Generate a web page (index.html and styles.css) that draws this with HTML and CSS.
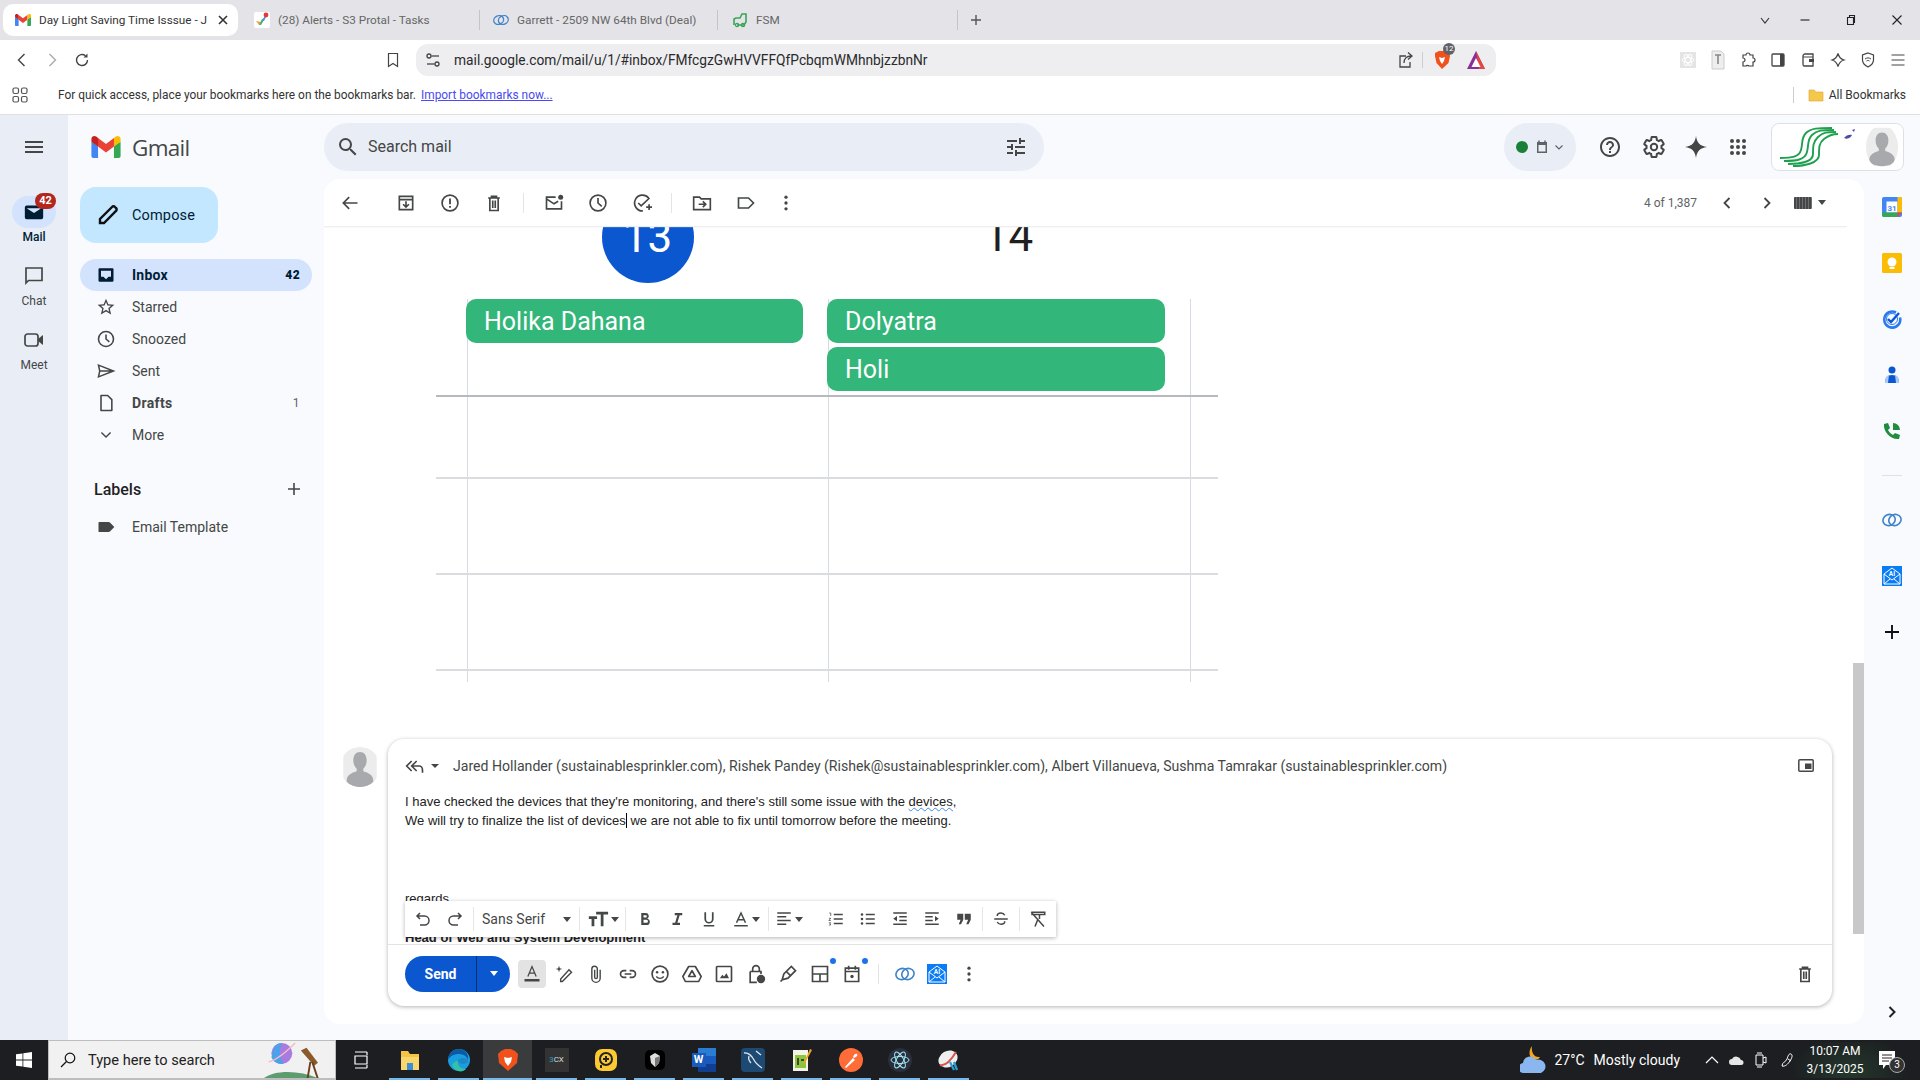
FILE: index.html
```html
<!DOCTYPE html>
<html lang="en">
<head>
<meta charset="utf-8">
<title>Gmail</title>
<link rel="stylesheet" href="styles.css">
</head>
<body>
<svg class="sprite" aria-hidden="true">
  <symbol id="gm" viewBox="0 0 256 193">
    <path fill="#4285F4" d="M58.18 192.05V93.14L27.5 65.08 0 49.5v125.1c0 9.6 7.8 17.45 17.45 17.45h40.73z"/>
    <path fill="#34A853" d="M197.82 192.05h40.73c9.65 0 17.45-7.85 17.45-17.45V49.5l-31.16 17.84-27.02 25.8v98.91z"/>
    <path fill="#EA4335" d="M58.18 93.14l-4.17-38.65 4.17-36.99L128 69.87l69.82-52.37 4.67 34.99-4.67 40.65L128 145.5z"/>
    <path fill="#FBBC04" d="M197.82 17.5v75.64L256 49.5V26.23c0-21.59-24.64-33.88-41.89-20.95z"/>
    <path fill="#C5221F" d="M0 49.5l26.76 20.07L58.18 93.14V17.5L41.89 5.28C24.6-7.65 0 4.64 0 26.23z"/>
  </symbol>
  <symbol id="zoho" viewBox="0 0 24 24">
    <g fill="none" stroke="#3f83c9" stroke-width="1.900">
      <ellipse cx="8.500" cy="12" rx="7.500" ry="6.500" transform="rotate(-25 8.500 12)"/>
      <ellipse cx="15.500" cy="12" rx="7.500" ry="6.500" transform="rotate(-25 15.500 12)"/>
    </g>
  </symbol>
  <symbol id="ai" viewBox="0 0 20 20">
    <rect width="20" height="20" fill="#0a7cf5"/>
    <path d="M2 8l8-6 8 6v10H2z M2 8l8 6 8-6 M2 18l6-5 M18 18l-6-5" fill="none" stroke="#fff" stroke-width="1"/>
    <text x="10" y="9.500" font-size="6.500" font-weight="700" font-family="Roboto" fill="#fff" text-anchor="middle">AI</text>
  </symbol>
  <symbol id="trash" viewBox="0 0 24 24">
    <path d="M5 6h14M9 6V4h6v2M7 6v15h10V6M10.500 9v9M13.500 9v9" fill="none" stroke="currentColor" stroke-width="2"/>
  </symbol>
  <symbol id="avatar" viewBox="0 0 40 48">
    <rect width="40" height="48" fill="#ececec"/>
    <path d="M20 6c5 0 8 4 8 10 0 5-2 8-4 10v3c6 2 12 4 12 12 0 3-7 7-16 7S4 44 4 41c0-8 6-10 12-12v-3c-2-2-4-5-4-10 0-6 3-10 8-10z" fill="#a7a9ac"/>
  </symbol>
</svg>

<header class="tabstrip">
  <div class="tab tab-active">
    <svg class="fav"><use href="#gm"/></svg>
    <span class="tab-title">Day Light Saving Time Isssue - J</span>
    <svg class="tab-x" viewBox="0 0 12 12"><path d="M2 2l8 8M10 2l-8 8" stroke="#333" stroke-width="1.600"/></svg>
  </div>
  <div class="tab tab-b">
    <svg class="fav" viewBox="0 0 16 16"><rect width="16" height="16" rx="2" fill="#fff"/><path d="M2 9l3 4 2-3z" fill="#e9a23b"/><path d="M5 13l3-6 2 1-3 5z" fill="#3cb371"/><path d="M8 8l3-4 1 1-2 4z" fill="#4a90d9"/><circle cx="12" cy="3" r="2.400" fill="#e53935"/></svg>
    <span>(28) Alerts - S3 Protal - Tasks</span>
  </div>
  <div class="tab tab-c">
    <svg class="fav"><use href="#zoho"/></svg>
    <span>Garrett - 2509 NW 64th Blvd (Deal)</span>
  </div>
  <div class="tab tab-d">
    <svg class="fav" viewBox="0 0 16 16"><path d="M2 13V7l2-1h4l2-4h4v8l-2 3H5" fill="none" stroke="#3aa655" stroke-width="1.600"/><circle cx="5" cy="13" r="1.600" fill="none" stroke="#3aa655" stroke-width="1.300"/><circle cx="11" cy="13" r="1.600" fill="none" stroke="#3aa655" stroke-width="1.300"/></svg>
    <span>FSM</span>
  </div>
  <svg class="plus" viewBox="0 0 12 12"><path d="M6 1v10M1 6h10" stroke="#555" stroke-width="1.400"/></svg>
  <div class="win">
    <div class="win-b win-chev"><svg viewBox="0 0 12 12"><path d="M2 4l4 5 4-5" fill="none" stroke="#333" stroke-width="1.100"/></svg></div>
    <div class="win-b"><svg viewBox="0 0 12 12"><path d="M1.500 6h9" stroke="#222" stroke-width="1.100"/></svg></div>
    <div class="win-b"><svg viewBox="0 0 12 12"><path d="M2.500 3.500h6v7h-6zM4.500 3.500v-2h5v7h-1" fill="none" stroke="#222" stroke-width="1.100"/></svg></div>
    <div class="win-b"><svg viewBox="0 0 12 12"><path d="M1.500 1.500l9 9M10.500 1.500l-9 9" stroke="#222" stroke-width="1.100"/></svg></div>
  </div>
</header>

<nav class="navbar">
  <div class="nb"><svg viewBox="0 0 16 16"><path d="M10.500 2l-6 6 6 6" fill="none" stroke="#444" stroke-width="1.400"/></svg></div>
  <div class="nb"><svg viewBox="0 0 16 16"><path d="M5.500 2l6 6-6 6" fill="none" stroke="#aaa" stroke-width="1.400"/></svg></div>
  <div class="nb"><svg viewBox="0 0 16 16"><path d="M13.500 8a5.500 5.500 0 1 1-2-4.200" fill="none" stroke="#444" stroke-width="1.400"/><path d="M13.500 1.500v4h-4z" fill="#444"/></svg></div>
  <div class="nb nb-mark"><svg viewBox="0 0 16 16"><path d="M3.500 1.500h9v13L8 11.500l-4.500 3z" fill="none" stroke="#444" stroke-width="1.200"/></svg></div>
  <div class="omni">
    <svg class="omni-tune" viewBox="0 0 18 18"><g fill="none" stroke="#444" stroke-width="1.300"><circle cx="5" cy="5" r="2"/><path d="M7.500 5H15"/><circle cx="13" cy="13" r="2"/><path d="M3 13h7.500"/></g></svg>
    <span class="url">mail.google.com/mail/u/1/#inbox/FMfcgzGwHVVFFQfPcbqmWMhnbjzzbnNr</span>
    <div class="omni-end">
      <svg class="o-share" viewBox="0 0 18 18"><path d="M9 5H3v11h10v-5M7 12c0-5 3-7 7-7M11 1.500l4 3.500-4 3.500" fill="none" stroke="#444" stroke-width="1.300"/></svg>
      <span class="o-sep"></span>
      <div class="o-brave">
        <svg viewBox="0 0 18 20"><path d="M2 3l4-2h6l4 2 1 3-1.500 7L9 19l-5.500-6L2 6z" fill="#f1511b"/><path d="M6 7l3 1 3-1-1 4-2 3-2-3z" fill="#fff"/></svg>
        <span class="o-badge">12</span>
      </div>
      <svg class="o-tri" viewBox="0 0 20 20"><path d="M10 1l9 18H1z" fill="#8a2f98"/><path d="M10 1l9 18h-6z" fill="#e24a3c"/><path d="M10 8l4.500 9h-9z" fill="#fff"/></svg>
    </div>
  </div>
  <div class="exts">
    <div class="nb"><svg viewBox="0 0 16 16"><rect width="16" height="16" fill="#e4e4e4"/><g fill="none" stroke="#fff" stroke-width="1"><ellipse cx="8" cy="8" rx="6" ry="2.500"/><ellipse cx="8" cy="8" rx="6" ry="2.500" transform="rotate(60 8 8)"/><ellipse cx="8" cy="8" rx="6" ry="2.500" transform="rotate(120 8 8)"/></g></svg></div>
    <div class="nb nb-tall"><svg viewBox="0 0 16 20"><path d="M2 1h9l3 3v15H2z" fill="#eee" stroke="#ccc"/><path d="M5 5h6M8 5v9" stroke="#888" stroke-width="1.600"/></svg></div>
    <div class="nb"><svg viewBox="0 0 16 16"><path d="M6 3a2 2 0 0 1 4 0h3v3a2 2 0 0 1 0 4v4H9a2 2 0 0 0-3 0H3v-4a2 2 0 0 0 0-4V3z" fill="none" stroke="#444" stroke-width="1.200"/></svg></div>
    <div class="nb"><svg viewBox="0 0 16 16"><rect x="2" y="2" width="12" height="12" rx="1" fill="none" stroke="#444" stroke-width="1.300"/><rect x="10" y="2" width="4" height="12" fill="#444"/></svg></div>
    <div class="nb"><svg viewBox="0 0 16 16"><path d="M3 4c0-1 1-2 2-2h8v12H4c-1 0-1-1-1-2z" fill="none" stroke="#444" stroke-width="1.300"/><path d="M3 5h10" stroke="#444"/><rect x="9" y="7" width="5" height="3" fill="#444"/></svg></div>
    <div class="nb"><svg viewBox="0 0 16 16"><path d="M8 1.500c1 4 2.500 5.500 6 6.500-3.500 1-5 2.500-6 6.500-1-4-2.500-5.500-6-6.500 3.500-1 5-2.500 6-6.500z" fill="none" stroke="#444" stroke-width="1.200"/></svg></div>
    <div class="nb"><svg viewBox="0 0 16 16"><path d="M8 1l5.500 2v5c0 3-2.500 5.500-5.500 7-3-1.500-5.500-4-5.500-7V3z" fill="none" stroke="#444" stroke-width="1.200"/><path d="M5 7c2-1.500 4-1.500 6 0M6.500 9c1-.7 2-.7 3 0" fill="none" stroke="#444"/></svg></div>
    <div class="nb"><svg viewBox="0 0 16 16"><path d="M1.500 3h13M1.500 8h13M1.500 13h13" stroke="#444" stroke-width="1.200"/></svg></div>
  </div>
</nav>

<div class="bookmarks">
  <svg class="bm-apps" viewBox="0 0 16 16"><g fill="none" stroke="#555" stroke-width="1.200"><rect x="1" y="1" width="5.500" height="5.500" rx="1.500"/><rect x="9.500" y="1" width="5.500" height="5.500" rx="1.500"/><rect x="1" y="9.500" width="5.500" height="5.500" rx="1.500"/><rect x="9.500" y="9.500" width="5.500" height="5.500" rx="1.500"/></g></svg>
  <span class="bm-text">For quick access, place your bookmarks here on the bookmarks bar.</span>
  <a class="bm-link">Import bookmarks now...</a>
  <span class="bm-sep"></span>
  <svg class="bm-folder" viewBox="0 0 16 16"><path d="M1 3h5l2 2h7v9H1z" fill="#f5c84c" stroke="#d9a52c" stroke-width=".6"/></svg>
  <span class="bm-all">All Bookmarks</span>
</div>

<main class="gmail">
  <aside class="rail">
    <div class="rail-top"><svg class="i" viewBox="0 0 24 24"><path d="M3 18h18v-2H3v2zm0-5h18v-2H3v2zm0-7v2h18V6H3z"/></svg></div>
    <div class="rail-item rail-on">
      <div class="rail-pill">
        <svg class="i-dark" viewBox="0 0 24 24"><path d="M4 5h16a2 2 0 0 1 2 2v11a2 2 0 0 1-2 2H4a2 2 0 0 1-2-2V7a2 2 0 0 1 2-2zm8 8l8-5H4z"/></svg>
        <span class="rail-badge">42</span>
      </div>
      <span>Mail</span>
    </div>
    <div class="rail-item">
      <div class="rail-pill"><svg class="i" viewBox="0 0 24 24"><path d="M4 4h16v12.500H6.500L4 19z" fill="none" stroke="#444746" stroke-width="1.700"/></svg></div>
      <span>Chat</span>
    </div>
    <div class="rail-item">
      <div class="rail-pill"><svg class="i" viewBox="0 0 24 24"><rect x="3" y="6" width="13" height="12" rx="2.500" fill="none" stroke="#444746" stroke-width="1.700"/><path d="M16 11l5-4v10l-5-4z"/></svg></div>
      <span>Meet</span>
    </div>
  </aside>

  <div class="work">
    <div class="top">
      <div class="brand">
        <svg class="brand-m"><use href="#gm"/></svg>
        <span class="brand-t">Gmail</span>
      </div>
      <div class="search">
        <svg class="i-24" viewBox="0 0 24 24"><path d="M15.500 14h-.79l-.28-.27A6.471 6.471 0 0 0 16 9.500 6.500 6.500 0 1 0 9.500 16c1.610 0 3.090-.59 4.230-1.570l.27.28v.79l5 4.990L20.490 19l-4.990-5zm-6 0C7.010 14 5 11.990 5 9.500S7.010 5 9.500 5 14 7.010 14 9.500 11.990 14 9.500 14z"/></svg>
        <span class="search-t">Search mail</span>
        <svg class="i-24 search-tune" viewBox="0 0 24 24"><path d="M3 17v2h6v-2H3zM3 5v2h10V5H3zm10 16v-2h8v-2h-8v-2h-2v6h2zM7 9v2H3v2h4v2h2V9H7zm14 4v-2H11v2h10zm-6-4h2V7h4V5h-4V3h-2v6z"/></svg>
      </div>
      <div class="status">
        <span class="status-dot"></span>
        <svg class="status-cal" viewBox="0 0 16 16"><path d="M3 3h10v11H3z" fill="#5f6368"/><path d="M5 1.500v2M11 1.500v2" stroke="#5f6368" stroke-width="1.500"/><rect x="4.500" y="6" width="7" height="6.500" fill="#e9eef6"/></svg>
        <svg class="status-ch" viewBox="0 0 12 12"><path d="M2.500 4.500L6 8l3.500-3.500" fill="none" stroke="#5f6368" stroke-width="1.200"/></svg>
      </div>
      <div class="tools">
        <div class="tool"><svg class="i-24" viewBox="0 0 24 24"><path d="M11 18h2v-2h-2v2zm1-16C6.480 2 2 6.480 2 12s4.480 10 10 10 10-4.480 10-10S17.520 2 12 2zm0 18c-4.410 0-8-3.590-8-8s3.590-8 8-8 8 3.590 8 8-3.590 8-8 8zm0-14c-2.210 0-4 1.790-4 4h2c0-1.100.9-2 2-2s2 .9 2 2c0 2-3 1.750-3 5h2c0-2.250 3-2.500 3-5 0-2.210-1.790-4-4-4z"/></svg></div>
        <div class="tool"><svg class="i-24" viewBox="0 0 24 24"><path fill="none" stroke="#444746" stroke-width="2" d="M19.430 12.980c.04-.32.07-.64.07-.98 0-.34-.03-.66-.07-.98l2.110-1.650c.19-.15.24-.42.12-.64l-2-3.460a.5.5 0 0 0-.61-.22l-2.490 1c-.52-.4-1.080-.73-1.690-.98l-.38-2.650A.488.488 0 0 0 14 2h-4c-.25 0-.46.18-.49.42l-.38 2.650c-.61.25-1.170.59-1.690.98l-2.490-1a.5.5 0 0 0-.61.22l-2 3.460c-.13.22-.07.49.12.64l2.110 1.650c-.04.32-.07.65-.07.98 0 .33.03.66.07.98l-2.110 1.650c-.19.15-.24.42-.12.64l2 3.460a.5.5 0 0 0 .61.22l2.490-1c.52.4 1.080.73 1.690.98l.38 2.650c.03.24.24.42.49.42h4c.25 0 .46-.18.49-.42l.38-2.650c.61-.25 1.170-.59 1.690-.98l2.490 1a.5.5 0 0 0 .61-.22l2-3.460c.12-.22.07-.49-.12-.64l-2.110-1.650z"/><circle cx="12" cy="12" r="3.200" fill="none" stroke="#444746" stroke-width="2"/></svg></div>
        <div class="tool tool-n"><svg class="i-24" viewBox="0 0 24 24"><path d="M12 1c1 7 4 10 11 11-7 1-10 4-11 11-1-7-4-10-11-11 7-1 10-4 11-11z"/></svg></div>
        <div class="tool"><svg class="i-24" viewBox="0 0 24 24"><g><circle cx="6" cy="6" r="2"/><circle cx="12" cy="6" r="2"/><circle cx="18" cy="6" r="2"/><circle cx="6" cy="12" r="2"/><circle cx="12" cy="12" r="2"/><circle cx="18" cy="12" r="2"/><circle cx="6" cy="18" r="2"/><circle cx="12" cy="18" r="2"/><circle cx="18" cy="18" r="2"/></g></svg></div>
      </div>
      <div class="account">
        <svg class="acc-logo" viewBox="0 0 82 40"><g fill="none" stroke="#1fa04f" stroke-width="1.900"><path d="M2 31c12 0 19-1 21-8s0-12 5-17 12-5 26-5"/><path d="M6 34c12 0 21-1 23-9s0-12 5-17 10-5 22-5"/><path d="M10 37c12 0 25-2 25-10s0-12 5-17 9-5 18-5"/><path d="M15 39c12 0 26-3 26-11s0-12 5-16 8-5 14-5"/></g><path d="M66 11c2-3 6-4 8-3-1 2-4 5-8 3z" fill="#4d4aa8"/><path d="M74 3l3-1-1 3z" fill="#4d4aa8"/></svg>
        <svg class="acc-av"><use href="#avatar"/></svg>
      </div>
    </div>

    <div class="under">
      <div class="side">
        <div class="compose">
          <svg class="i-compose" viewBox="0 0 24 24"><path d="M4 20v-4L16 4a2 2 0 0 1 3 0l1 1a2 2 0 0 1 0 3L8 20z" fill="none" stroke="#111" stroke-width="2.400"/></svg>
          <span>Compose</span>
        </div>
        <div class="nav">
          <div class="row row-on">
            <svg class="i-row" viewBox="0 0 24 24"><path fill="#001d35" d="M4 4h16a1 1 0 0 1 1 1v14a1 1 0 0 1-1 1H4a1 1 0 0 1-1-1V5a1 1 0 0 1 1-1zm2 3v7h3l3 3 3-3h3V7z"/></svg>
            <span>Inbox</span><b class="cnt">42</b>
          </div>
          <div class="row">
            <svg class="i-row" viewBox="0 0 24 24"><path d="M22 9.240l-7.190-.62L12 2 9.190 8.630 2 9.240l5.460 4.730L5.820 21 12 17.270 18.180 21l-1.630-7.030L22 9.240zM12 15.400l-3.760 2.270 1-4.280-3.320-2.880 4.380-.38L12 6.100l1.710 4.040 4.380.38-3.320 2.880 1 4.280L12 15.400z"/></svg>
            <span>Starred</span>
          </div>
          <div class="row">
            <svg class="i-row" viewBox="0 0 24 24"><circle cx="12" cy="12" r="9" fill="none" stroke="#444746" stroke-width="1.900"/><path d="M12 6.500V12l4 3.500" fill="none" stroke="#444746" stroke-width="1.900"/></svg>
            <span>Snoozed</span>
          </div>
          <div class="row">
            <svg class="i-row" viewBox="0 0 24 24"><path d="M3 5l18 7-18 7 1.500-7z M4.500 12H21" fill="none" stroke="#444746" stroke-width="1.800"/></svg>
            <span>Sent</span>
          </div>
          <div class="row row-b">
            <svg class="i-row" viewBox="0 0 24 24"><path d="M6 3h8l5 5v13H6z" fill="none" stroke="#444746" stroke-width="1.900" stroke-linejoin="round"/></svg>
            <span>Drafts</span><span class="cnt cnt-l">1</span>
          </div>
          <div class="row">
            <svg class="i-row" viewBox="0 0 24 24"><path d="M6.500 9l5.500 5.500L17.500 9" fill="none" stroke="#444746" stroke-width="1.700"/></svg>
            <span>More</span>
          </div>
        </div>
        <div class="labels-h">
          <span>Labels</span>
          <svg viewBox="0 0 14 14"><path d="M7 1v12M1 7h12" stroke="#444746" stroke-width="1.600"/></svg>
        </div>
        <div class="row row-lab">
          <svg class="i-row" viewBox="0 0 24 24"><path d="M4 6h11c1 0 1.500.4 2 1l5 5-5 5c-.5.600-1 1-2 1H4a1 1 0 0 1-1-1V7a1 1 0 0 1 1-1z"/></svg>
          <span>Email Template</span>
        </div>
      </div>

      <section class="panel">
        <div class="bar">
          <div class="tb tb-back"><svg viewBox="0 0 24 24"><path d="M21 12H4M11 5l-7 7 7 7" fill="none" stroke="currentColor" stroke-width="2"/></svg></div>
          <div class="tb tb-gap"><svg viewBox="0 0 24 24"><path d="M4 4h16v16H4zM4 8h16M12 10v7M8.500 13.500L12 17l3.500-3.500" fill="none" stroke="currentColor" stroke-width="2"/></svg></div>
          <div class="tb"><svg viewBox="0 0 24 24"><circle cx="12" cy="12" r="9.500" fill="none" stroke="currentColor" stroke-width="2"/><path d="M12 6.500v7M12 15.500v2.200" stroke="currentColor" stroke-width="2.200"/></svg></div>
          <div class="tb"><svg viewBox="0 0 24 24"><use href="#trash"/></svg></div>
          <span class="tsep"></span>
          <div class="tb"><svg viewBox="0 0 24 24"><path d="M14 5H3v14h18V10M3 7l9 6 5-3" fill="none" stroke="currentColor" stroke-width="2"/><circle cx="20" cy="5" r="3" fill="currentColor"/></svg></div>
          <div class="tb"><svg viewBox="0 0 24 24"><circle cx="12" cy="12" r="9.500" fill="none" stroke="currentColor" stroke-width="2"/><path d="M12 6v6l4.500 4" fill="none" stroke="currentColor" stroke-width="2"/></svg></div>
          <div class="tb"><svg viewBox="0 0 24 24"><path d="M20 6a9.500 9.500 0 1 0-7 15.500M7.500 12l3.500 3.500L21 6M17 17h7M20.500 13.500v7" fill="none" stroke="currentColor" stroke-width="2"/></svg></div>
          <span class="tsep"></span>
          <div class="tb"><svg viewBox="0 0 24 24"><path d="M2 5h7l2 2h11v13H2zM8 13.500h8M13 10l3.500 3.500L13 17" fill="none" stroke="currentColor" stroke-width="2"/></svg></div>
          <div class="tb"><svg viewBox="0 0 24 24"><path d="M3 6h12l6 6-6 6H3z" fill="none" stroke="currentColor" stroke-width="2"/></svg></div>
          <div class="tb tb-more"><svg viewBox="0 0 24 24"><circle cx="12" cy="5" r="2"/><circle cx="12" cy="12" r="2"/><circle cx="12" cy="19" r="2"/></svg></div>
          <span class="page">4 of 1,387</span>
          <svg class="pg pg-a" viewBox="0 0 16 16"><path d="M10.500 3l-5 5 5 5" fill="none" stroke="#444746" stroke-width="1.800"/></svg>
          <svg class="pg pg-b" viewBox="0 0 16 16"><path d="M5.500 3l5 5-5 5" fill="none" stroke="#444746" stroke-width="1.800"/></svg>
          <span class="kbd"></span><span class="kbd-c"></span>
        </div>
        <div class="thread">
          <div class="cal">
            <div class="c-row c-head">
              <div class="c-num"><span class="c-today">13</span></div>
              <div class="c-num"><span class="c-day">14</span></div>
            </div>
            <div class="c-row c-events">
              <span class="c-gut"></span>
              <div class="c-cell">
                <div class="ev">Holika Dahana</div>
              </div>
              <div class="c-cell c-cell-w">
                <div class="ev">Dolyatra</div>
                <div class="ev">Holi</div>
              </div>
              <div class="c-cell"></div>
            </div>
            <div class="c-row c-r2"><span class="c-gut"></span><div class="c-cell"></div><div class="c-cell"></div><div class="c-cell"></div></div>
            <div class="c-row c-r3"><span class="c-gut"></span><div class="c-cell"></div><div class="c-cell"></div><div class="c-cell"></div></div>
            <div class="c-row c-r3"><span class="c-gut"></span><div class="c-cell"></div><div class="c-cell"></div><div class="c-cell"></div></div>
            <div class="c-row c-tail"><span class="c-gut"></span><div class="c-cell"></div><div class="c-cell"></div><div class="c-cell"></div></div>
          </div>

          <div class="reply">
            <svg class="reply-av"><use href="#avatar"/></svg>
            <div class="box">
              <div class="box-h">
                <svg class="re-ic" viewBox="0 0 24 24"><path d="M8 6l-6 6 6 6M14 6l-6 6 6 6M8 12h9c2 0 4 2 4 5v3" fill="none" stroke="#444746" stroke-width="2"/></svg>
                <span class="caret-d"></span>
                <span class="recips">Jared Hollander (sustainablesprinkler.com), Rishek Pandey (Rishek@sustainablesprinkler.com), Albert Villanueva, Sushma Tamrakar (sustainablesprinkler.com)</span>
                <svg class="popout" viewBox="0 0 16 13"><rect x=".8" y=".8" width="14.400" height="11.400" rx="1" fill="none" stroke="#444746" stroke-width="1.500"/><rect x="7" y="4.500" width="6.500" height="5.500" fill="#444746"/></svg>
              </div>
              <div class="box-b">
                <p class="line">I have checked the devices that they're monitoring, and there's still some issue with the <span class="spell">devices,</span></p>
                <p class="line">We will try to finalize the list of devices<span class="cursor"></span> we are not able to fix until tomorrow before the meeting.</p>
                <p class="line line-reg">regards</p>
                <p class="line line-head">Head of Web and System Development</p>
                <div class="fmt">
                  <div class="f"><svg viewBox="0 0 24 24"><path d="M8 4L4 8l4 4M4 8h10a5 5 0 0 1 0 12H8" fill="none" stroke="currentColor" stroke-width="2"/></svg></div>
                  <div class="f"><svg viewBox="0 0 24 24"><path d="M16 4l4 4-4 4M20 8H10a5 5 0 0 0 0 12h6" fill="none" stroke="currentColor" stroke-width="2"/></svg></div>
                  <span class="fsep"></span>
                  <div class="f-font"><span>Sans Serif</span><i class="dn"></i></div>
                  <span class="fsep fsep-a"></span>
                  <div class="f f-w f-tt"><svg viewBox="0 0 24 24"><path d="M2 9h9v3H8v8H5v-8H2zM10 4h13v3h-5v13h-3V7h-5z"/></svg><i class="dn"></i></div>
                  <span class="fsep fsep-b"></span>
                  <div class="f"><svg viewBox="0 0 24 24"><path d="M7 4h6a4 4 0 0 1 2 7.500A4.300 4.300 0 0 1 14 20H7zm3 3v3h3a1.500 1.500 0 0 0 0-3zm0 6v4h4a2 2 0 0 0 0-4z"/></svg></div>
                  <div class="f"><svg viewBox="0 0 24 24"><path d="M9 4h10v3h-3.500l-3 10H16v3H6v-3h3.500l3-10H9z"/></svg></div>
                  <div class="f"><svg viewBox="0 0 24 24"><path d="M7 3v9a5 5 0 0 0 10 0V3M5 21h14" fill="none" stroke="currentColor" stroke-width="2.300"/></svg></div>
                  <div class="f f-w"><svg viewBox="0 0 24 24"><path d="M6 17l6-13 6 13M8 13h8" fill="none" stroke="currentColor" stroke-width="2"/><path d="M3 20h18v2H3z"/></svg><i class="dn"></i></div>
                  <span class="fsep"></span>
                  <div class="f f-w f-al"><svg viewBox="0 0 24 24"><path d="M3 4h18M3 9h12M3 14h18M3 19h12" stroke="currentColor" stroke-width="2"/></svg><i class="dn"></i></div>
                  <div class="f"><svg viewBox="0 0 24 24"><path d="M9 6h12M9 12h12M9 18h12" stroke="currentColor" stroke-width="2"/><path d="M3 4h2v4M2.500 11h2.500l-2.500 3h2.500M2.500 17h2.500l-1 1.200 1 1.800h-2.500" fill="none" stroke="currentColor"/></svg></div>
                  <div class="f"><svg viewBox="0 0 24 24"><path d="M9 6h12M9 12h12M9 18h12" stroke="currentColor" stroke-width="2"/><circle cx="4" cy="6" r="1.700"/><circle cx="4" cy="12" r="1.700"/><circle cx="4" cy="18" r="1.700"/></svg></div>
                  <div class="f"><svg viewBox="0 0 24 24"><path d="M3 4h18M11 9h10M11 14h10M3 19h18" stroke="currentColor" stroke-width="2"/><path d="M8 8v7l-5-3.500z"/></svg></div>
                  <div class="f"><svg viewBox="0 0 24 24"><path d="M3 4h18M3 9h10M3 14h10M3 19h18" stroke="currentColor" stroke-width="2"/><path d="M16 8v7l5-3.500z"/></svg></div>
                  <div class="f"><svg viewBox="0 0 24 24"><path d="M3 5h8v8l-3 6H5l2.500-6H3zM13 5h8v8l-3 6h-3l2.500-6H13z"/></svg></div>
                  <span class="fsep"></span>
                  <div class="f"><svg viewBox="0 0 24 24"><path d="M3 12h18M17 7c-1-2-3-3-5-3-3 0-5 1.500-5 4M7 16c1 2 3 3 5 3 3 0 5-1.500 5-4" fill="none" stroke="currentColor" stroke-width="2"/></svg></div>
                  <span class="fsep"></span>
                  <div class="f"><svg viewBox="0 0 24 24"><path d="M4 3h17v3H4zM11 6h3v6M8 22l4-10M3 3l17 19" fill="none" stroke="currentColor" stroke-width="2"/></svg></div>
                </div>
              </div>
              <div class="box-f">
                <div class="send"><span class="send-t">Send</span><span class="send-m"><i class="dn dn-w"></i></span></div>
                <div class="c c-a"><svg viewBox="0 0 24 24"><path d="M7 15L12 3l5 12M8.500 11h7" fill="none" stroke="#444746" stroke-width="1.500"/><rect x="3" y="18" width="18" height="3" fill="#444746"/></svg></div>
                <div class="c"><svg viewBox="0 0 24 24"><path d="M8 21v-3L18 7l3 3-11 11z" fill="none" stroke="currentColor" stroke-width="1.700"/><path d="M6 2l1 3 3 1-3 1-1 3-1-3-3-1 3-1z"/></svg></div>
                <div class="c"><svg viewBox="0 0 24 24"><path d="M17 7v10a5 5 0 0 1-10 0V6a3.300 3.300 0 0 1 6.600 0v10a1.600 1.600 0 0 1-3.200 0V7" fill="none" stroke="currentColor" stroke-width="1.700"/></svg></div>
                <div class="c"><svg viewBox="0 0 24 24"><path d="M10 8H7a4 4 0 0 0 0 8h3M14 8h3a4 4 0 0 1 0 8h-3M8 12h8" fill="none" stroke="currentColor" stroke-width="2"/></svg></div>
                <div class="c"><svg viewBox="0 0 24 24"><circle cx="12" cy="12" r="9.500" fill="none" stroke="currentColor" stroke-width="2"/><circle cx="8.500" cy="10" r="1.500"/><circle cx="15.500" cy="10" r="1.500"/><path d="M7.500 15c2.500 3 6.500 3 9 0" fill="none" stroke="currentColor" stroke-width="1.700"/></svg></div>
                <div class="c"><svg viewBox="0 0 24 24"><path d="M8 3h8l7 12-3 6H4l-3-6zM12 8l4 7H8z" fill="none" stroke="currentColor" stroke-width="2" stroke-linejoin="round"/></svg></div>
                <div class="c"><svg viewBox="0 0 24 24"><rect x="3" y="3" width="18" height="18" rx="1" fill="none" stroke="currentColor" stroke-width="2"/><path d="M7 17l3-4 2 2 3-4 3 6z"/></svg></div>
                <div class="c"><svg viewBox="0 0 24 24"><path d="M8 9V6a4 4 0 0 1 8 0v3M5 9h13v3M5 9v13h8" fill="none" stroke="currentColor" stroke-width="2"/><circle cx="18" cy="18" r="5"/></svg></div>
                <div class="c"><svg viewBox="0 0 24 24"><path d="M5 19l2-7 9-9 5 5-9 9zM3 21l2-2M10 9l5 5" fill="none" stroke="currentColor" stroke-width="2"/></svg></div>
                <div class="c c-dot"><svg viewBox="0 0 24 24"><path d="M3 3h18v18H3zM3 12h18M12 12v9" fill="none" stroke="currentColor" stroke-width="2"/></svg><i class="blue"></i></div>
                <div class="c c-dot"><svg viewBox="0 0 24 24"><path d="M4 5h16v16H4zM8 2v5M16 2v5M4 9h16" fill="none" stroke="currentColor" stroke-width="2"/><circle cx="12" cy="15" r="2"/></svg><i class="blue"></i></div>
                <span class="csep"></span>
                <div class="c c-z"><svg><use href="#zoho"/></svg></div>
                <div class="c c-ai"><svg><use href="#ai"/></svg></div>
                <div class="c"><svg viewBox="0 0 24 24"><circle cx="12" cy="5" r="2"/><circle cx="12" cy="12" r="2"/><circle cx="12" cy="19" r="2"/></svg></div>
                <div class="c c-del"><svg viewBox="0 0 24 24"><use href="#trash"/></svg></div>
              </div>
            </div>
          </div>
          <span class="thumb"></span>
        </div>
      </section>

      <aside class="addons">
        <div class="ad"><svg viewBox="0 0 20 20"><rect width="20" height="20" rx="2" fill="#4285f4"/><rect x="4.500" y="4.500" width="11" height="11" fill="#fff"/><path d="M15.500 0H18a2 2 0 0 1 2 2v13.500h-4.500z" fill="#fbbc04"/><path d="M0 15.500h15.500V20H2a2 2 0 0 1-2-2z" fill="#34a853"/><path d="M15.500 15.500H20L15.500 20z" fill="#ea4335"/><text x="10" y="13.500" font-size="8" font-weight="700" font-family="Roboto" fill="#4285f4" text-anchor="middle">31</text></svg></div>
        <div class="ad"><svg viewBox="0 0 20 20"><rect width="20" height="20" rx="1.500" fill="#fbbc04"/><circle cx="10" cy="9" r="4.500" fill="#fff"/><rect x="7.500" y="14" width="5" height="2" fill="#fff"/></svg></div>
        <div class="ad"><svg viewBox="0 0 20 20"><path d="M14 3.500a8 8 0 1 0 4 5" fill="none" stroke="#2a7bef" stroke-width="2.600"/><circle cx="10" cy="10" r="5.500" fill="none" stroke="#2a7bef" stroke-width="1"/><path d="M6 10l3 3 8-9" fill="none" stroke="#0b57d0" stroke-width="2.400"/></svg></div>
        <div class="ad"><svg viewBox="0 0 20 20"><circle cx="10" cy="5" r="3.500" fill="#0b57d0"/><path d="M3 18c0-5 2-8 7-8s7 3 7 8z" fill="#0b57d0"/><path d="M13 10c3 1 4 4 4 8h-3z" fill="#a8c7fa"/><path d="M7 10c-3 1-4 4-4 8h3z" fill="#a8c7fa"/></svg></div>
        <div class="ad"><svg viewBox="0 0 20 20"><path d="M2 3l4-1 2 5-2 2c1 2 3 4 5 5l2-2 5 2-1 4C9 19 1 11 2 3z" fill="#1e8e3e"/><path d="M11 2a7 7 0 0 1 7 7h-7z" fill="#1e8e3e"/></svg></div>
        <span class="ad-sep"></span>
        <div class="ad"><svg><use href="#zoho"/></svg></div>
        <div class="ad"><svg><use href="#ai"/></svg></div>
        <div class="ad"><svg viewBox="0 0 20 20"><path d="M10 3v14M3 10h14" stroke="#111" stroke-width="1.900"/></svg></div>
        <svg class="ad-hide" viewBox="0 0 16 16"><path d="M5.500 3l5 5-5 5" fill="none" stroke="#222" stroke-width="2"/></svg>
      </aside>
    </div>
  </div>
</main>

<footer class="taskbar">
  <div class="start"><svg viewBox="0 0 16 16"><path fill="#fff" d="M0 2.300l6.500-.9v6.200H0zM7.300 1.300L16 0v7.600H7.300zM0 8.400h6.500v6.200L0 13.700zM7.300 8.400H16V16l-8.700-1.200z"/></svg></div>
  <div class="tsearch">
    <svg class="ts-ic" viewBox="0 0 16 16"><circle cx="10" cy="6" r="4.800" fill="none" stroke="#111" stroke-width="1.200"/><path d="M6.500 9.500L1 15" stroke="#111" stroke-width="1.300"/></svg>
    <span>Type here to search</span>
    <svg class="ts-art" viewBox="0 0 74 40"><path d="M0 40c10-10 40-10 60 0z" fill="#5c9c6e"/><circle cx="20" cy="13" r="11" fill="#a77be0"/><path d="M12 6a11 11 0 0 1 8-4c-3 6-3 14 2 22a11 11 0 0 1-13-7z" fill="#4aa3e8"/><path d="M6 22C14 20 26 10 34 2" fill="none" stroke="#f3b9c9" stroke-width="1.500"/><path d="M40 10l6-3 12 16-4 3z" fill="#8a5a2c"/><path d="M50 22l-3 18M52 22l6 18" stroke="#6b4020" stroke-width="2"/></svg>
  </div>
  <div class="apps">
    <div class="app app-tv"><svg viewBox="0 0 20 20"><path d="M4 2h12M4 18h12M4 6h12v8H4z M16 5V2M16 18v-3" fill="none" stroke="#fff" stroke-width="1.200"/></svg></div>
    <div class="app app-on"><svg viewBox="0 0 24 24"><path d="M3 3h7l2 3h9v16H3z" fill="#f6c445"/><path d="M3 9h18v13H3z" fill="#f9d76c"/><path d="M9 15h6v7H9z" fill="#3a8fd9"/></svg></div>
    <div class="app app-on"><svg viewBox="0 0 24 24"><circle cx="12" cy="12" r="11" fill="#1b9de2"/><path d="M12 1C6 1 1 6 1 12c2-4 6-6 11-6 4 0 8 2 9 6 1-6-3-11-9-11z" fill="#0c59a4"/><path d="M11 15c0 3 3 6 8 6-2 2-5 3-8 2-3-1-5-3-6-6 1-2 3-4 6-4z" fill="#35c1a6"/><ellipse cx="16" cy="13" rx="5" ry="3" fill="#1c1e21" opacity=".15"/></svg></div>
    <div class="app app-on app-act"><svg viewBox="0 0 22 24"><path d="M4 3l4-2h6l4 2 3 3-1 9-9 8-9-8-1-9z" fill="#f1511b"/><path d="M7 9l4 1 4-1-1 5-3 4-3-4z" fill="#fff"/></svg></div>
    <div class="app app-on"><div class="cx"><b>3</b>CX</div></div>
    <div class="app app-on"><svg viewBox="0 0 24 24"><rect x="1" y="1" width="22" height="22" rx="7" fill="#fcc933"/><circle cx="12" cy="11" r="6" fill="none" stroke="#222" stroke-width="2"/><path d="M7 17v3M9 11h6M12 8v6" stroke="#222" stroke-width="2"/></svg></div>
    <div class="app app-on"><svg viewBox="0 0 24 24"><rect x="2" y="2" width="20" height="20" rx="5" fill="#000"/><path d="M7 8l5-3 5 3-1 7-4 4-4-4z" fill="#ddd"/><path d="M12 10l5-2-1 7-4 4z" fill="#777"/></svg></div>
    <div class="app app-on"><div class="word"><i></i><i></i><i></i><b>W</b></div></div>
    <div class="app app-on"><svg viewBox="0 0 24 24"><rect width="24" height="24" rx="4" fill="#1d4a72"/><path d="M3 5c4-1 8 3 10 7s5 6 8 8M8 8c-1 3 0 5 2 7M15 3l5 4" fill="none" stroke="#dfe8ef" stroke-width="1.300"/></svg></div>
    <div class="app app-on"><svg viewBox="0 0 24 24"><path d="M3 2h15v21H3z" fill="#f3f3e8"/><rect x="5" y="7" width="11" height="13" fill="#8cc63f"/><path d="M8 10v7M11 12h3" stroke="#222" stroke-width="1.500"/><path d="M22 2l-7 13-2 2 1-3 6-13z" fill="#f3a521"/></svg></div>
    <div class="app app-on"><svg viewBox="0 0 24 24"><circle cx="12" cy="12" r="12" fill="#ff6c37"/><path d="M6 19l8-9 2 2-9 8zM14 9c1-3 3-4 4-3s0 3-3 4z" fill="#fff"/></svg></div>
    <div class="app app-on"><svg viewBox="0 0 24 24"><circle cx="12" cy="12" r="12" fill="#2b2e3b"/><g fill="none" stroke="#9feaf9" stroke-width="1"><ellipse cx="12" cy="12" rx="9" ry="3.500"/><ellipse cx="12" cy="12" rx="9" ry="3.500" transform="rotate(60 12 12)"/><ellipse cx="12" cy="12" rx="9" ry="3.500" transform="rotate(120 12 12)"/></g></svg></div>
    <div class="app app-on"><svg viewBox="0 0 24 24"><ellipse cx="11" cy="11" rx="10" ry="8" fill="#eee" transform="rotate(-30 11 11)"/><path d="M3 17c4 1 10-3 16-13" fill="none" stroke="#d9534f" stroke-width="2"/><path d="M13 14l4 8M17 14l3 8" stroke="#2a9fd6" stroke-width="2.200"/></svg></div>
  </div>
  <div class="tray">
    <svg class="w-ic" viewBox="0 0 26 30"><path d="M12 1c-4 5-3 12 2 14 3 0 5-1 6-3-6 1-9-5-8-11z" fill="#f5a623"/><path d="M4 28a5 5 0 0 1-1-10 7 7 0 0 1 13-3 6 6 0 0 1 5 13z" fill="#8ab7ef"/></svg>
    <span class="w-t">27°C</span><span class="w-d">Mostly cloudy</span>
    <svg class="t-i t-ch" viewBox="0 0 16 16"><path d="M2 11l6-6 6 6" fill="none" stroke="#fff" stroke-width="1.200"/></svg>
    <svg class="t-i t-cl" viewBox="0 0 16 16"><path d="M4 13a3 3 0 0 1 0-6 5 5 0 0 1 9 1 2.500 2.500 0 0 1 0 5z" fill="#e6e6e6"/></svg>
    <svg class="t-i t-me" viewBox="0 0 16 16"><path d="M4 3h7v10H4zM11 6l3-1v6l-3-1M5 1h5M5 15h5" fill="none" stroke="#fff"/></svg>
    <svg class="t-i t-pe" viewBox="0 0 16 16"><path d="M2 14c0-4 4-4 5-7s2-6 4-5 1 4-1 7-5 6-8 5zM8 7l3 2" fill="none" stroke="#fff"/></svg>
    <div class="clock"><span>10:07 AM</span><span>3/13/2025</span></div>
    <div class="notif">
      <svg viewBox="0 0 18 20"><path d="M1 1h16v14h-9l-3 4v-4H1z" fill="#fff"/><path d="M4 5h10M4 8h10M4 11h7" stroke="#222"/></svg>
      <span>3</span>
    </div>
  </div>
</footer>
</body>
</html>
```

FILE: styles.css
```css
* { box-sizing: border-box; }
html, body { margin: 0; height: 100%; }
body {
  width: 1920px; height: 1080px; overflow: hidden;
  display: flex; flex-direction: column;
  font-family: Roboto, "Noto Sans", sans-serif; color: #1f1f1f; background: #f8fafd;
}
svg { display: block; flex: none; }
.sprite { width: 0; height: 0; position: absolute; }
p { margin: 0; }

/* tab strip */
.tabstrip { height: 40px; flex: none; background: #e3e3e8; display: flex; align-items: center; font-size: 11.750px; color: #666; }
.tab { height: 32px; display: flex; align-items: center; gap: 8px; position: relative; white-space: nowrap; }
.tab-active { margin-left: 3px; width: 235px; padding-left: 12px; background: #fff; border-radius: 10px; color: #333; }
.tab-title { width: 168px; }
.tab-x { width: 12px; height: 12px; margin-left: 2px; }
.tab-b { width: 242px; padding-left: 16px; }
.tab-c { width: 238px; padding-left: 13px; }
.tab-d { width: 240px; padding-left: 14px; }
.tab-b, .tab-c, .tab-d { border-right: 1px solid #c4c4c8; height: 20px; }
.fav { width: 16px; height: 16px; }
.plus { width: 12px; height: 12px; margin-left: 12px; }
.win { margin-left: auto; display: flex; }
.win-b { width: 46px; height: 32px; display: flex; align-items: center; justify-content: center; }
.win-b svg { width: 12px; height: 12px; }
.win-chev { width: 34px; }

/* nav */
.navbar { height: 40px; flex: none; background: #fff; display: flex; align-items: center; padding: 0 7px; }
.nb { width: 30px; height: 32px; display: flex; align-items: center; justify-content: center; }
.nb svg { width: 16px; height: 16px; }
.nb-tall svg { width: 16px; height: 20px; }
.nb-mark { margin-left: 281px; }
.omni { margin-left: 8px; width: 1080px; height: 32px; background: #eeeef1; border-radius: 12px; display: flex; align-items: center; padding: 0 10px 0 8px; }
.omni-tune { width: 18px; height: 18px; }
.url { margin-left: 12px; font-size: 13.750px; color: #2a2a2a; }
.omni-end { margin-left: auto; display: flex; align-items: center; }
.o-share { width: 18px; height: 18px; }
.o-sep { width: 1px; height: 16px; background: #ccc; margin: 0 10px 0 7px; }
.o-brave { position: relative; width: 18px; height: 20px; }
.o-brave svg { width: 18px; height: 20px; }
.o-badge { position: absolute; top: -7px; left: 10px; width: 12px; height: 12px; line-height: 12px; border-radius: 50%; background: #5f6368; color: #fff; font-size: 8px; text-align: center; }
.o-tri { width: 20px; height: 20px; margin-left: 15px; }
.exts { margin-left: auto; display: flex; }

/* bookmarks */
.bookmarks { height: 35px; flex: none; background: #fff; border-bottom: 1px solid #e0e0e0; display: flex; align-items: center; padding: 0 14px 4px 12px; font-size: 11.900px; color: #333; }
.bm-apps { width: 16px; height: 16px; }
.bm-text { margin-left: 30px; }
.bm-link { margin-left: 5px; color: #4a4af0; text-decoration: underline; }
.bm-sep { margin-left: auto; width: 1px; height: 16px; background: #ccc; }
.bm-folder { width: 16px; height: 18px; margin-left: 14px; }
.bm-all { margin-left: 5px; font-size: 12px; }

/* gmail frame */
.gmail { flex: 1; min-height: 0; display: flex; background: #f8fafd; }
.rail { width: 68px; flex: none; background: #e9eef6; display: flex; flex-direction: column; align-items: center; }
.rail-top { height: 64px; margin-bottom: 17px; display: flex; align-items: center; }
.i { width: 24px; height: 24px; fill: #444746; }
.rail-item { width: 68px; height: 64px; display: flex; flex-direction: column; align-items: center; font-size: 12px; color: #444746; }
.rail-item > span { line-height: 19px; }
.rail-on > span { color: #001d35; font-weight: 500; }
.rail-pill { position: relative; width: 44px; height: 32px; border-radius: 16px; display: flex; align-items: center; justify-content: center; }
.rail-on .rail-pill { background: #d3e3fd; }
.i-dark { width: 22px; height: 22px; fill: #001d35; }
.rail-badge { position: absolute; left: 23px; top: -3px; width: 21px; height: 16px; border-radius: 8px; background: #b3261e; color: #fff; font-size: 11px; font-weight: 700; line-height: 16px; text-align: center; }
.work { flex: 1; min-width: 0; display: flex; flex-direction: column; }

/* top */
.top { height: 64px; flex: none; display: flex; align-items: center; }
.brand { width: 256px; display: flex; align-items: center; padding-left: 23px; }
.brand-m { width: 30px; height: 22px; }
.brand-t { margin-left: 11px; font-size: 22.500px; color: #444746; font-family: "Open Sans", Roboto, sans-serif; letter-spacing: -.7px; }
.search { width: 720px; height: 48px; border-radius: 24px; background: #e9eef6; display: flex; align-items: center; padding: 0 16px 0 12px; }
.i-24 { width: 24px; height: 24px; fill: #444746; }
.search-t { margin-left: 8px; margin-top: -2px; font-size: 16px; color: #444746; }
.search-tune { margin-left: auto; }
.status { width: 72px; height: 48px; margin-left: 460px; border-radius: 24px; background: #e9eef6; display: flex; align-items: center; padding-left: 12px; }
.status-dot { width: 12px; height: 12px; border-radius: 50%; background: #188038; }
.status-cal { width: 16px; height: 16px; margin-left: 6px; }
.status-ch { width: 12px; height: 12px; margin-left: 3px; }
.tools { display: flex; margin-left: 12px; }
.tool { width: 44px; height: 44px; display: flex; align-items: center; justify-content: center; }
.tool-n { width: 40px; }
.account { width: 133px; height: 48px; margin-left: 11px; border: 1px solid #dde1e7; border-radius: 8px; background: #fff; display: flex; align-items: center; padding-left: 6px; }
.acc-logo { width: 82px; height: 40px; }
.acc-av { width: 32px; height: 44px; margin-left: 6px; border-radius: 50%; }

.under { flex: 1; min-height: 0; display: flex; }

/* side */
.side { width: 256px; flex: none; padding: 8px 12px 0; }
.compose { width: 138px; height: 56px; border-radius: 16px; background: #c2e7ff; display: flex; align-items: center; padding-left: 16px; font-size: 14.500px; color: #001d35; letter-spacing: .15px; }
.i-compose { width: 24px; height: 24px; margin-right: 12px; }
.nav { margin-top: 16px; }
.row { width: 232px; height: 32px; border-radius: 16px; display: flex; align-items: center; padding: 0 12px 0 16px; font-size: 14px; color: #444746; }
.i-row { width: 20px; height: 20px; margin-right: 16px; fill: #444746; }
.row-on { background: #d3e3fd; color: #001d35; font-weight: 700; letter-spacing: .25px; }
.row-b { font-weight: 700; letter-spacing: .35px; }
.cnt { margin-left: auto; font-size: 12px; letter-spacing: .4px; }
.cnt-l { font-weight: 400; color: #5f6368; }
.labels-h { margin-top: 22px; height: 32px; width: 232px; display: flex; align-items: center; justify-content: space-between; padding: 0 11px 0 14px; font-size: 16px; font-weight: 500; color: #1f1f1f; }
.labels-h svg { width: 14px; height: 14px; }
.row-lab { margin-top: 6px; }

/* panel */
.panel { width: 1540px; flex: none; margin-bottom: 16px; background: #fff; border-radius: 16px; display: flex; flex-direction: column; overflow: hidden; }
.bar { height: 48px; flex: none; margin-right: 17px; display: flex; align-items: center; padding-left: 4px; color: #444746; box-shadow: 0 1px 1px -1px #ddd; border-bottom: 1px solid #eceef1; font-size: 12px; position: relative; z-index: 2; background: #fff; }
.tb { width: 44px; height: 40px; display: flex; align-items: center; justify-content: center; }
.tb svg { width: 20px; height: 20px; fill: currentColor; }
.tb-gap { margin-left: 12px; }
.tb-more { width: 36px; }
.tsep { width: 1px; height: 20px; background: #e3e4e6; margin: 0 8px 0 7px; }
.page { margin-left: auto; margin-right: 22px; color: #5f6368; }
.pg { width: 16px; height: 16px; }
.pg-b { margin-left: 24px; margin-right: 19px; }
.kbd { width: 18px; height: 12px; border-radius: 1px; background: repeating-linear-gradient(90deg, #444746 0 2px, #6d7073 2px 3px); }
.kbd-c { width: 0; height: 0; margin: 0 21px 0 6px; border: 4px solid transparent; border-top: 5px solid #444746; border-bottom: 0; }

.thread { flex: 1; min-height: 0; position: relative; overflow: hidden; }
.cal { margin-left: 112px; width: 782px; }
.c-row { display: grid; grid-template-columns: 31px 361px 362px 28px; }
.c-head { height: 72px; overflow: hidden; grid-template-columns: 392px 361px; }
.c-num { display: flex; justify-content: center; padding-left: 31px; }
.c-num:last-child { padding-left: 0; }
.c-today { flex: none; width: 92px; height: 92px; margin-top: -36px; border-radius: 50%; background: #0b57d0; color: #fff; font-size: 44px; line-height: 92px; text-align: center; }
.c-day { font-size: 44px; line-height: 56px; margin-top: -19px; color: #1f1f1f; }
.c-cell { border-left: 1px solid #d5dae3; display: flex; flex-direction: column; gap: 4px; }
.c-events { height: 98px; border-bottom: 2px solid #b6babf; }
.c-r2 { height: 82px; border-bottom: 2px solid #dadce0; }
.c-r3 { height: 96px; border-bottom: 2px solid #dadce0; }
.c-tail { height: 11px; }
.ev { width: 337px; margin-left: -2px; height: 44px; border-radius: 10px; background: #33b679; color: #fff; font-size: 25px; line-height: 45px; padding-left: 18px; }
.c-cell-w .ev { width: 338px; }

.reply { margin-top: 57px; margin-left: 16px; display: flex; gap: 8px; align-items: flex-start; }
.reply-av { width: 40px; height: 40px; margin-top: 8px; border-radius: 50%; }
.box { width: 1444px; height: 267px; border-radius: 16px; background: #fff; box-shadow: 0 1px 4px rgba(0,0,0,.3); display: flex; flex-direction: column; overflow: hidden; }
.box-h { height: 53px; flex: none; display: flex; align-items: center; padding: 0 18px 0 17px; font-size: 14.100px; color: #444746; }
.re-ic { width: 20px; height: 20px; }
.caret-d { width: 0; height: 0; margin: 0 14px 0 6px; border: 4px solid transparent; border-top: 4px solid #444746; border-bottom: 0; }
.recips { white-space: nowrap; }
.popout { width: 16px; height: 13px; margin-left: auto; }
.box-b { height: 152px; flex: none; padding: 0 17px; position: relative; overflow: hidden; font-family: "Liberation Sans", Arial, sans-serif; font-size: 13px; color: #222; }
.line { line-height: 19px; white-space: nowrap; }
.spell { text-decoration: underline wavy #4285f4 1px; text-underline-offset: 1px; }
.cursor { display: inline-block; width: 1px; height: 15px; background: #000; vertical-align: -3px; }
.line-reg { margin-top: 59px; }
.line-head { margin-top: 20px; font-weight: 700; }
.fmt { position: absolute; left: 17px; bottom: 7px; width: 651px; height: 36px; background: #fff; box-shadow: 0 1px 4px rgba(0,0,0,.3); display: flex; align-items: center; padding-left: 2px; font-family: Roboto, sans-serif; color: #444746; border-radius: 1px; }
.f { width: 32px; height: 32px; display: flex; align-items: center; justify-content: center; gap: 2px; fill: currentColor; flex: none; }
.f svg { width: 18px; height: 18px; fill: currentColor; }
.f-w { width: 41px; }
.f-tt svg { width: 22px; height: 22px; }
.f-al { width: 49px; justify-content: flex-start; padding-left: 4px; }
.fsep { width: 1px; height: 24px; background: #e6e6e6; margin: 0 2px; flex: none; }
.fsep-a { margin: 0 2px 0 5px; }
.fsep-b { margin: 0 3px 0 2px; }
.f-font { width: 92px; margin-left: 6px; display: flex; align-items: center; justify-content: space-between; padding-right: 3px; font-size: 14px; flex: none; }
.dn { display: block; flex: none; width: 0; height: 0; border: 4px solid transparent; border-top: 5px solid #444746; border-bottom: 0; }
.dn-w { border-top-color: #fff; }
.box-f { flex: 1; min-height: 0; border-top: 1px solid #e3e3e3; display: flex; align-items: center; padding: 0 11px 4px 17px; color: #444746; }
.send { width: 105px; height: 36px; border-radius: 18px; background: #0b57d0; color: #fff; display: flex; align-items: center; font-size: 14px; font-weight: 700; margin-right: 6px; }
.send-t { width: 72px; text-align: center; border-right: 1px solid #06306e; line-height: 36px; }
.send-m { flex: 1; display: flex; justify-content: center; }
.c { width: 32px; height: 32px; display: flex; align-items: center; justify-content: center; position: relative; }
.c svg { width: 20px; height: 20px; fill: currentColor; }
.c-a::before { content: ""; position: absolute; left: 2px; top: 2px; width: 28px; height: 28px; background: #e3e3e3; border-radius: 4px; }
.c-a svg { position: relative; }
.blue { position: absolute; right: 0; top: 0; width: 6px; height: 6px; border-radius: 50%; background: #1a73e8; }
.csep { width: 1px; height: 20px; background: #e3e3e3; margin: 0 10px; }
.c-z svg, .c-ai svg { width: 20px; height: 20px; }
.c-del { margin-left: auto; }
.thumb { position: absolute; right: 0; top: 436px; width: 11px; height: 271px; background: #c8c8c8; }

/* add-ons */
.addons { width: 56px; flex: none; display: flex; flex-direction: column; align-items: center; position: relative; }
.ad { height: 56px; display: flex; align-items: center; justify-content: center; flex: none; }
.ad svg { width: 20px; height: 20px; }
.ad-sep { width: 20px; height: 1px; background: #dfe1e5; margin: 16px 0; flex: none; }
.ad-hide { position: absolute; left: 20px; bottom: 20px; width: 16px; height: 16px; }

/* taskbar */
.taskbar { height: 40px; flex: none; background: #1c1e21; display: flex; align-items: center; color: #fff; font-size: 14px; }
.start { width: 48px; height: 40px; display: flex; align-items: center; justify-content: center; }
.start svg { width: 16px; height: 16px; }
.tsearch { width: 288px; height: 40px; background: #f1f1f1; border: 1px solid #bdbdbd; border-bottom: 2px solid #bdbdbd; color: #222; font-size: 14.600px; display: flex; align-items: center; padding: 1px 0 0 11px; overflow: hidden; }
.ts-ic { width: 16px; height: 16px; margin-right: 12px; }
.ts-art { width: 74px; height: 38px; margin-left: auto; }
.apps { display: flex; }
.app { width: 49px; height: 40px; display: flex; align-items: center; justify-content: center; position: relative; }
.app svg { width: 24px; height: 24px; }
.app-tv svg { width: 20px; height: 20px; }
.app-on::after { content: ""; position: absolute; left: 4px; right: 4px; bottom: 0; height: 2px; background: #76b9ed; }
.app-act { background: #3a3b3d; }
.app-act::after { left: 0; right: 0; }
.cx { width: 24px; height: 24px; background: #333; color: #ddd; font-size: 8px; line-height: 24px; text-align: center; }
.cx b { color: #2a9fd6; font-weight: 400; }
.word { position: relative; width: 24px; height: 24px; display: flex; flex-direction: column; padding-left: 6px; }
.word i { display: block; flex: 1; background: #2b7cd3; }
.word i:nth-child(2) { background: #185abd; }
.word i:nth-child(3) { background: #103f91; }
.word b { position: absolute; left: 0; top: 5px; width: 14px; height: 14px; background: #185abd; color: #fff; font-size: 11px; line-height: 14px; text-align: center; }
.tray { margin-left: auto; display: flex; align-items: center; background: radial-gradient(ellipse 60px 40px at 330px 30px, #24382c, transparent); }
.w-ic { width: 26px; height: 30px; }
.w-t { margin-left: 8px; }
.w-d { margin-left: 9px; margin-right: 24px; }
.t-i { width: 16px; height: 16px; margin-right: 8px; }
.t-pe { margin-left: 4px; margin-right: 9px; }
.clock { width: 60px; display: flex; flex-direction: column; align-items: center; font-size: 12px; line-height: 18px; }
.notif { position: relative; width: 38px; margin-left: 3px; margin-right: 14px; display: flex; justify-content: center; }
.notif svg { width: 18px; height: 20px; }
.notif span { position: absolute; left: 21px; top: 7px; width: 16px; height: 16px; border: 1px solid #aaa; border-radius: 50%; background: #333; font-size: 10px; line-height: 14px; text-align: center; }
```
